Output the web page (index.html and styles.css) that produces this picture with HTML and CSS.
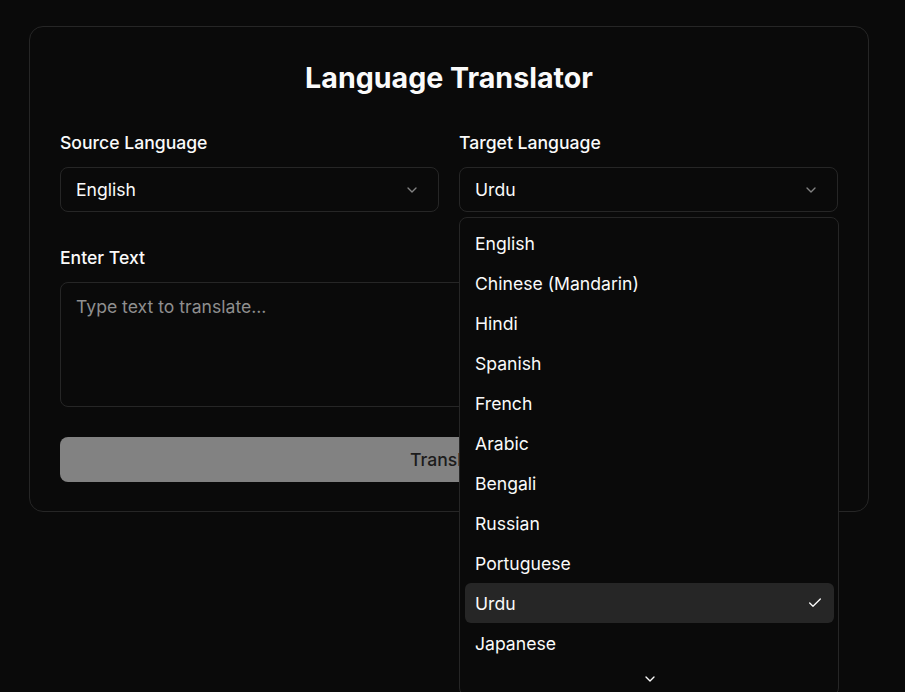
FILE: index.html
```html
<!DOCTYPE html>
<html lang="en">
<head>
<meta charset="utf-8">
<title>Language Translator</title>
<link rel="stylesheet" href="styles.css">
</head>
<body>
<main class="page">
  <section class="card">
    <h1 class="title">Language Translator</h1>
    <div class="grid">
      <div class="field">
        <label class="label">Source Language</label>
        <button class="select" type="button">
          <span>English</span>
          <svg class="chev" width="16" height="16" viewBox="0 0 24 24" fill="none" stroke="currentColor" stroke-width="2" stroke-linecap="round" stroke-linejoin="round"><path d="m6 9 6 6 6-6"/></svg>
        </button>
      </div>
      <div class="field target">
        <label class="label">Target Language</label>
        <button class="select" type="button">
          <span>Urdu</span>
          <svg class="chev" width="16" height="16" viewBox="0 0 24 24" fill="none" stroke="currentColor" stroke-width="2" stroke-linecap="round" stroke-linejoin="round"><path d="m6 9 6 6 6-6"/></svg>
        </button>
        <div class="menu">
          <div class="item">English</div>
          <div class="item">Chinese (Mandarin)</div>
          <div class="item">Hindi</div>
          <div class="item">Spanish</div>
          <div class="item">French</div>
          <div class="item">Arabic</div>
          <div class="item">Bengali</div>
          <div class="item">Russian</div>
          <div class="item">Portuguese</div>
          <div class="item active">Urdu
            <svg class="check" width="16" height="16" viewBox="0 0 24 24" fill="none" stroke="currentColor" stroke-width="2" stroke-linecap="round" stroke-linejoin="round"><path d="M20 6 9 17l-5-5"/></svg>
          </div>
          <div class="item">Japanese</div>
          <div class="scroll">
            <svg width="16" height="16" viewBox="0 0 24 24" fill="none" stroke="currentColor" stroke-width="2" stroke-linecap="round" stroke-linejoin="round"><path d="m6 9 6 6 6-6"/></svg>
          </div>
        </div>
      </div>
    </div>
    <div class="field text-field">
      <label class="label">Enter Text</label>
      <textarea class="textarea" placeholder="Type text to translate..."></textarea>
    </div>
    <button class="btn" type="button">Translate</button>
  </section>
</main>
</body>
</html>
```
FILE: styles.css
```css
* { box-sizing: border-box; }
html, body { margin: 0; padding: 0; }
body {
  background: #0a0a0a;
  color: #fafafa;
  font-family: Inter, "Noto Sans", sans-serif;
  height: 692px;
  overflow: hidden;
}
.page {
  padding: 26px 36px 0 29px;
}
.card {
  width: 840px;
  border: 1px solid #262626;
  border-radius: 14px;
  padding: 28px 30px 29px 30px;
}
.title {
  margin: 0;
  text-align: center;
  font-size: 28.6px;
  line-height: 46px;
  font-weight: 700;
}
.grid {
  margin-top: 30px;
  display: grid;
  grid-template-columns: 1fr 1fr;
  gap: 20px;
}
.field {
  display: flex;
  flex-direction: column;
  gap: 12px;
}
.target { position: relative; }
.label {
  font-size: 17.6px;
  line-height: 24px;
  font-weight: 500;
}
.select {
  height: 45px;
  display: flex;
  align-items: center;
  justify-content: space-between;
  padding: 0 18px 0 15px;
  background: transparent;
  border: 1px solid #262626;
  border-radius: 8px;
  color: #fafafa;
  font-family: inherit;
  font-size: 17.6px;
  text-align: left;
}
.chev { color: #fafafa; opacity: 0.5; }
.text-field { margin-top: 34px; }
.textarea {
  height: 125px;
  resize: none;
  background: transparent;
  border: 1px solid #262626;
  border-radius: 8px;
  padding: 13px 15px;
  font-family: inherit;
  font-size: 17.6px;
  color: #fafafa;
}
.textarea::placeholder { color: #8f8f8f; }
.btn {
  margin-top: 30px;
  width: 100%;
  height: 45px;
  border: none;
  border-radius: 8px;
  background: #828282;
  color: #1c1c1c;
  font-family: inherit;
  font-size: 17.6px;
  font-weight: 500;
}
.menu {
  position: absolute;
  left: 0;
  top: 86px;
  width: 380px;
  background: #0a0a0a;
  border: 1px solid #262626;
  border-radius: 8px;
  padding: 5px 4px 0 5px;
  z-index: 5;
}
.item {
  height: 40px;
  display: flex;
  align-items: center;
  justify-content: space-between;
  padding: 0 11px 0 10px;
  border-radius: 6px;
  font-size: 17.6px;
}
.item.active { background: #262626; }
.scroll {
  height: 32px;
  display: flex;
  align-items: center;
  justify-content: center;
}
```
